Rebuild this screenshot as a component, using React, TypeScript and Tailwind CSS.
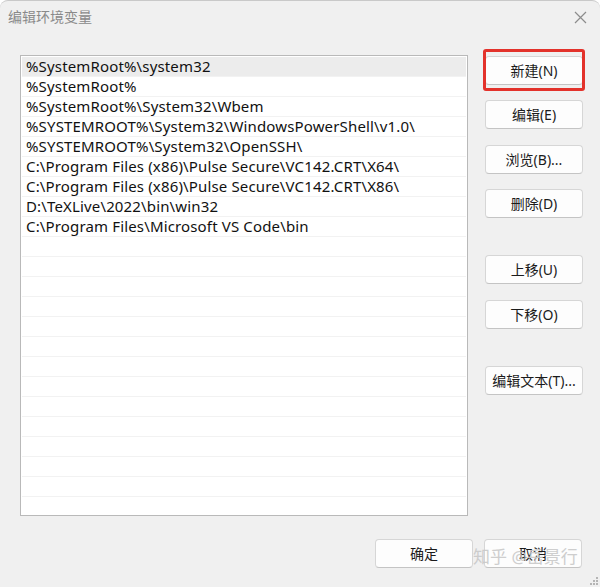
const paths = [
  '%SystemRoot%\\system32',
  '%SystemRoot%',
  '%SystemRoot%\\System32\\Wbem',
  '%SYSTEMROOT%\\System32\\WindowsPowerShell\\v1.0\\',
  '%SYSTEMROOT%\\System32\\OpenSSH\\',
  'C:\\Program Files (x86)\\Pulse Secure\\VC142.CRT\\X64\\',
  'C:\\Program Files (x86)\\Pulse Secure\\VC142.CRT\\X86\\',
  'D:\\TeXLive\\2022\\bin\\win32',
  'C:\\Program Files\\Microsoft VS Code\\bin',
];

const rows = Array.from({ length: 23 }, (_, i) => paths[i] ?? '');

function Btn({ label, className = '' }: { label: string; className?: string }) {
  return (
    <button
      className={`h-[29px] w-[98px] rounded-[4px] border border-[#d6d6d6] border-b-[#c4c4c4] bg-[#fdfdfd] text-[14px] leading-none text-[#1b1b1b] ${className}`}
    >
      {label}
    </button>
  );
}

export default function App() {
  return (
    <div
      className="relative h-[587px] w-[600px] overflow-hidden rounded-t-[8px] border-t border-[#c9c9c9] bg-[#f0f0f0]"
      style={{ fontFamily: '"Noto Sans", "Noto Sans CJK SC", sans-serif' }}
    >
      <div className="flex h-[31px] items-center justify-between pl-[8px] pr-[13px]">
        <span className="text-[14px] text-[#8a8a8a]">编辑环境变量</span>
        <svg width="13" height="13" viewBox="0 0 13 13" className="mt-[2px]">
          <path d="M1 1L12 12M12 1L1 12" stroke="#8c8c8c" strokeWidth="1.2" />
        </svg>
      </div>

      <div className="flex">
        <div className="ml-[20px] mt-[23px] h-[461px] w-[448px] overflow-hidden border border-[#b9b9b9] bg-white p-px">
          {rows.map((p, i) => (
            <div
              key={i}
              className={`flex h-[20px] items-center border-b border-[#f2f2f2] pl-[4px] text-[15px] leading-none tracking-[0.15px] text-[#111] ${
                i === 0 ? 'bg-[#ececec]' : ''
              }`}
            >
              {p}
            </div>
          ))}
        </div>

        <div className="ml-[17px] mt-[24px] flex flex-col">
          <div className="relative">
            <Btn label="新建(N)" />
            <div className="pointer-events-none absolute -bottom-[6px] -left-[2px] -right-[2px] -top-[7px] rounded-[3px] border-[3px] border-[#e3322b]" />
          </div>
          <Btn label="编辑(E)" className="mt-[15px]" />
          <Btn label="浏览(B)..." className="mt-[16px]" />
          <Btn label="删除(D)" className="mt-[15px]" />
          <Btn label="上移(U)" className="mt-[37px]" />
          <Btn label="下移(O)" className="mt-[16px]" />
          <Btn label="编辑文本(T)..." className="mt-[37px]" />
        </div>
      </div>

      <div className="mt-[23px] flex justify-end gap-[11px] pr-[18px]">
        <Btn label="确定" className="w-[97px]" />
        <Btn label="取消" className="w-[97px]" />
      </div>

      <div className="pointer-events-none absolute left-[473px] top-[547px] text-[17px] leading-none text-[#c9c9c9] opacity-90">
        知乎 @岳景行
      </div>

      <div className="absolute bottom-[2px] right-[2px] grid grid-cols-3 gap-[1px]">
        {[0, 0, 1, 0, 1, 1, 1, 1, 1].map((v, i) => (
          <div key={i} className={`h-[2px] w-[2px] ${v ? 'bg-[#b5b5b5]' : ''}`} />
        ))}
      </div>
    </div>
  );
}
